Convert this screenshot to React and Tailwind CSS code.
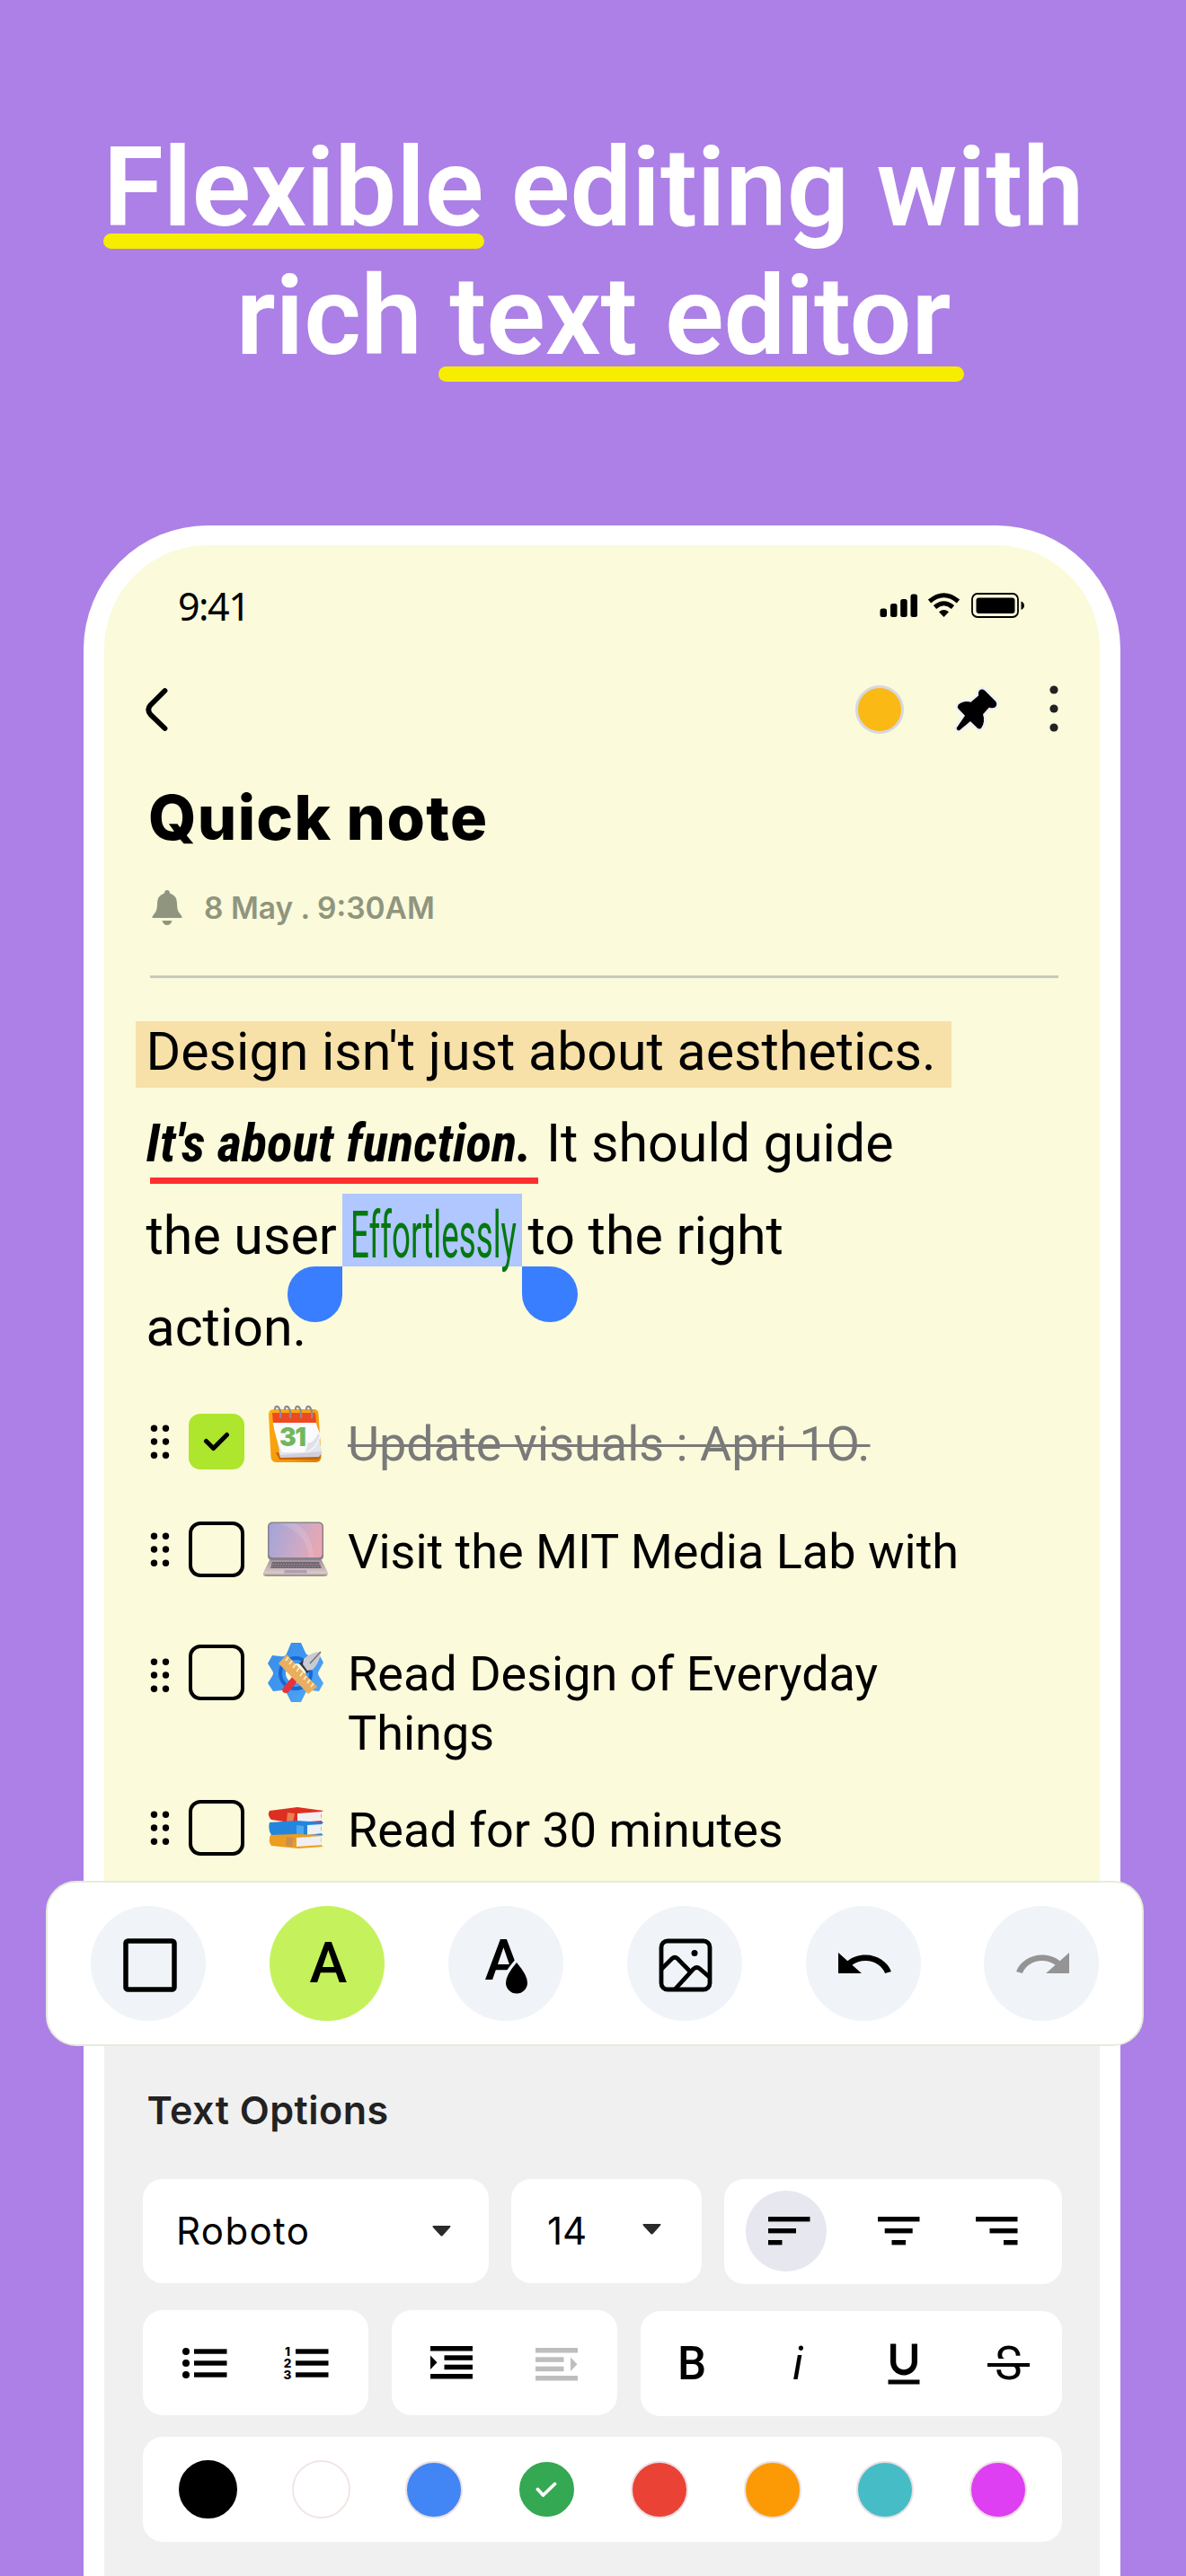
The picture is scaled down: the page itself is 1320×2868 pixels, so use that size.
import React from 'react';
import { MdFormatUnderlined } from 'react-icons/md';

const tasks = [
  { id: 1, text: 'Update visuals : Apri 1O.', icon: 'calendar', done: true, row: 'h-[120.6px]', offset: '' },
  { id: 2, text: 'Visit the MIT Media Lab with', icon: 'laptop', done: false, row: 'h-[135.2px]', offset: '' },
  { id: 3, text: 'Read Design of Everyday Things', icon: 'tools', done: false, row: 'h-[174.5px]', offset: 'mt-[1.5px]' },
  { id: 4, text: 'Read for 30 minutes', icon: 'books', done: false, row: 'h-[62px]', offset: '' },
];

const swatches = [
  'bg-black border-black size-[65px]',
  'bg-white border-[#f2e6e4] size-[65px]',
  'bg-[#4285f4] border-[#ecdfe3] size-[64px]',
  'bg-[#34a853] border-[#34a853] size-[61px]',
  'bg-[#ea4335] border-[#ecdfe3] size-[64px]',
  'bg-[#fb9a05] border-[#ecdfe3] size-[64px]',
  'bg-[#46bdc6] border-[#ecdfe3] size-[64px]',
  'bg-[#de3ff2] border-[#ecdfe3] size-[64px]',
];

const CalendarIcon = () => (
  <svg width="62" height="66" viewBox="0 0 62 66" className="mb-[15px]">
    <defs>
      <linearGradient id="calFrame" x1="0" y1="0" x2="1" y2="1">
        <stop offset="0" stopColor="#ffab12" />
        <stop offset="0.7" stopColor="#f29a0a" />
        <stop offset="1" stopColor="#d97706" />
      </linearGradient>
    </defs>
    <path d="M7 5h44q5 0 5.500 5l3 47q0 7-6 7H10q-6 0-6.500-6L1 11q0-6 6-6z" fill="url(#calFrame)" />
    <path d="M9 53l4 8h42q4-1 4-6z" fill="#c96304" />
    <path d="M5 9h48l1 11H6z" fill="#ee4a22" />
    <path d="M12 52l2 7 43-1 3-4-6-12z" fill="#cfd0da" />
    <path d="M6 20h48l6 32-46 4z" fill="#e4e5ee" />
    <path d="M6 20h47l6 14q-4 16-17 19H16Q8 36 6 20z" fill="#fbfbff" />
    <text x="13" y="46" fontFamily="Inter, sans-serif" fontWeight="900" fontSize="28" letterSpacing="-1.500" fill="#70b75a">31</text>
    <path d="M41 53q4-8 3-10 8-1 12-11l2 2q-4 15-17 19z" fill="#dfe0e8" />
    {[8, 19, 31, 43].map((x) => (
      <path key={x} d={`M${x} 5q0-4 3-3 4 3 3 12`} fill="none" stroke="#8c8c94" strokeWidth="2.200" strokeLinecap="round" />
    ))}
  </svg>
);

const LaptopIcon = () => (
  <svg width="74" height="62" viewBox="0 0 74 62">
    <defs>
      <linearGradient id="lapScreen" x1="0" y1="0.300" x2="1" y2="0.500">
        <stop offset="0" stopColor="#a5a5d6" />
        <stop offset="0.550" stopColor="#c9a9c8" />
        <stop offset="1" stopColor="#e9a7b2" />
      </linearGradient>
      <linearGradient id="lapBase" x1="0" y1="0" x2="0" y2="1">
        <stop offset="0" stopColor="#a3949c" />
        <stop offset="0.800" stopColor="#d9cac8" />
        <stop offset="1" stopColor="#8d8084" />
      </linearGradient>
    </defs>
    <rect x="6" y="0.500" width="62" height="43" rx="5" fill="#87808c" />
    <rect x="7.500" y="2" width="59" height="38" rx="4" fill="url(#lapScreen)" />
    <path d="M18 2h18q19 8 21 38h-5Q50 12 18 2z" fill="#fff" opacity="0.120" />
    <path d="M8 43h58l7 14q0 4-4 4H5q-5 0-4-4z" fill="url(#lapBase)" />
    <path d="M11 45h52l3 7H9z" fill="#706570" />
    <path d="M11 47.500h53M10 50h55" stroke="#a69aa2" strokeWidth="0.800" strokeDasharray="2 1" />
    <path d="M25 54h24l1 3.500H24z" fill="#b09db0" />
  </svg>
);

const ToolsIcon = () => (
  <svg width="64" height="68" viewBox="0 0 64 68">
    <defs>
      <linearGradient id="gear" x1="0" y1="0" x2="1" y2="1">
        <stop offset="0" stopColor="#3a8ce8" />
        <stop offset="0.500" stopColor="#3f97f2" />
        <stop offset="1" stopColor="#58aaf5" />
      </linearGradient>
    </defs>
    <path
      d="M27 1h11l5 11q2 4 7 3l8-1 5 9-5 9q-2 3 0 6l5 8-5 9-8-1q-5-1-7 3l-5 10H27l-5-10q-2-4-6-3l-9 1-6-9 5-8q2-3 0-6L1 24l5-9 9 1q5 1 7-3z"
      fill="url(#gear)"
    />
    <circle cx="32" cy="35" r="17" fill="none" stroke="#1768d3" strokeWidth="4" />
    <circle cx="32" cy="35" r="11" fill="#fbfada" />
    <path d="M19 50l10-12 6 5-11 13q-3 2-6 0-2-3 1-6z" fill="#e2353f" />
    <path d="M36 24l8-7 9 10-8 8z" fill="#35353f" />
    <path d="M41 19q9-8 19-8-1 12-9 20l-6 1-5-7z" fill="#c9cbd1" />
    <path d="M60 11L48 24" stroke="#70727c" strokeWidth="1.500" />
    <path d="M13 24l9-10 34 36-10 8z" fill="#e9ae5e" />
    <path d="M24 17l-3 4M28 21l-3 4M32 25l-3 4M36 29l-3 4M40 34l-3 4M44 38l-3 4M48 42l-3 4M52 46l-3 4" stroke="#fff2cf" strokeWidth="1.600" />
  </svg>
);

const BooksIcon = () => (
  <svg width="64" height="46" viewBox="0 0 64 46">
    <path d="M3 4L34 0l29 4-2 1v11l2 1-30 1L5 14Q0 9 3 4z" fill="#dc2f22" />
    <path d="M34 7l28-2q-3 5 0 10l-28 2z" fill="#f1eff2" />
    <path d="M23 6l8 1-2 10-7-1z" fill="#ee7d50" />
    <path d="M3 17l30-2 30 2-2 2v11l2 1-20 1-38-1q-4-6-2-14z" fill="#2385dd" />
    <path d="M45 20l17-1q-3 5 0 10l-17 2z" fill="#eef1f5" />
    <path d="M33 20l8 1v10l-8-1z" fill="#4da7f1" />
    <path d="M4 31l28-1 31 1-2 1v11l2 1-28 2-30-3q-4-5-1-12z" fill="#ed9d20" />
    <path d="M33 34l29-2q-3 5 0 10l-29 2z" fill="#f1eff2" />
    <path d="M22 33l8 1-2 10-7-1z" fill="#c98f51" />
  </svg>
);

const taskIcons = { calendar: CalendarIcon, laptop: LaptopIcon, tools: ToolsIcon, books: BooksIcon };

const DragHandle = () => (
  <svg width="22" height="62" viewBox="0 0 22 62">
    {[16.3, 31, 46.3].map((y) => (
      <g key={y}>
        <circle cx="4.500" cy={y} r="3.700" />
        <circle cx="17.500" cy={y} r="3.700" />
      </g>
    ))}
  </svg>
);

const TaskRow = ({ task }) => {
  const Icon = taskIcons[task.icon];
  const isTools = task.icon === 'tools';
  return (
    <li className={`flex items-start ${task.row}`}>
      <div className={`flex h-[62px] items-center ${task.offset}`}>
        <span className={isTools ? 'mt-[5px]' : ''}>
          <DragHandle />
        </span>
        <span
          className={`ml-[21px] flex size-[62px] items-center justify-center rounded-[13px] ${
            task.done ? 'bg-[#aee52d]' : 'border-4 border-black'
          }`}
        >
          {task.done && (
            <svg width="30" height="22" viewBox="0 0 30 22" fill="none" stroke="#000" strokeWidth="5" strokeLinecap="round" strokeLinejoin="round">
              <path d="M3.500 10.500l8 8L26.500 3.500" />
            </svg>
          )}
        </span>
        <span className="ml-[20px] flex w-[74px] justify-center">
          <Icon />
        </span>
      </div>
      <span
        className={`ml-[21px] mt-[1px] w-[695px] text-[54px] leading-[66.300px] ${
          task.done ? 'text-[#7a7a7a]' : 'text-black'
        }`}
      >
        {task.done ? <s className="decoration-[3px]">{task.text}</s> : task.text}
      </span>
    </li>
  );
};

const StatusIcons = () => (
  <svg width="161" height="28" viewBox="0 0 161 28">
    <rect x="0.500" y="17.500" width="7.500" height="9.500" rx="2.500" />
    <rect x="12" y="12" width="7.500" height="15" rx="2.500" />
    <rect x="23.200" y="7" width="7.500" height="20" rx="2.500" />
    <rect x="34.500" y="1.500" width="7.500" height="25.500" rx="2.500" />
    <g fill="none" stroke="#000" strokeWidth="5">
      <path d="M55.500 9.500q16-13.500 32 0" />
      <path d="M61.500 16q10-8.500 20 0" />
    </g>
    <path d="M66 21.200q5.500-4.400 11 0L71.500 27z" />
    <rect x="103" y="1" width="51" height="26" rx="6" fill="none" stroke="#000" strokeWidth="1.800" />
    <rect x="107.500" y="5.500" width="43" height="17.500" rx="3" />
    <path d="M157.500 9.500q3.500 1.500 3.500 4.700t-3.500 4.700z" />
  </svg>
);

const ToolButton = ({ active, children }) => (
  <button className={`flex size-[128px] items-center justify-center rounded-full ${active ? 'bg-[#c5f25c]' : 'bg-[#f0f4f8]'}`}>
    {children}
  </button>
);

const undoPath =
  'M12.5 8c-2.65 0-5.05.99-6.9 2.6L2 7v9h9l-3.62-3.62c1.39-1.16 3.16-1.88 5.12-1.88 3.54 0 6.55 2.31 7.6 5.500l2.37-.78C21.08 11.03 17.15 8 12.5 8z';

const Toolbar = () => (
  <div className="-ml-[65px] -mr-[49.500px] flex h-[184px] items-center justify-between rounded-[34px] border-2 border-[#e7ebda] bg-white pl-[48px] pr-[47.500px]">
    <ToolButton>
      <svg width="60" height="60" viewBox="0 0 60 60" className="ml-[3px] mt-[3px]">
        <rect x="3" y="3" width="54" height="54" rx="2.500" fill="none" stroke="#000" strokeWidth="5.500" />
      </svg>
    </ToolButton>
    <ToolButton active>
      <span className="ml-[3px] -mt-[1px] text-[63px] font-medium leading-none">A</span>
    </ToolButton>
    <ToolButton>
      <div className="relative flex items-center">
        <span className="-ml-[5px] -mt-[8px] text-[63px] font-medium leading-none">A</span>
        <svg width="36" height="52" viewBox="0 0 36 52" className="absolute left-[13px] top-[18px]">
          <path d="M18 10q12 14 12 21a12 12 0 0 1-24 0q0-7 12-21z" fill="#000" stroke="#f0f4f8" strokeWidth="9" />
          <path d="M18 8q12 14 12 22.500a12 12 0 0 1-24 0q0-8.500 12-22.500z" fill="#000" />
        </svg>
      </div>
    </ToolButton>
    <ToolButton>
      <svg width="60" height="60" viewBox="0 0 60 60" className="ml-[3px] mt-[3px]" fill="none" stroke="#000" strokeWidth="4.800">
        <rect x="3" y="3" width="54" height="54" rx="7" />
        <path d="M3 34.500l12-12q3-2.500 6 0L35 37" />
        <path d="M18 57l21-23q3.500-3 7 0l11.500 10" />
        <circle cx="40" cy="16.500" r="3.500" fill="#000" stroke="none" />
      </svg>
    </ToolButton>
    <ToolButton>
      <svg width="59" height="23" viewBox="2 7 20.500 9" preserveAspectRatio="none" className="-mt-[2px] ml-[3px]">
        <path d={undoPath} />
      </svg>
    </ToolButton>
    <ToolButton>
      <svg width="59" height="23" viewBox="2 7 20.500 9" preserveAspectRatio="none" className="-mt-[2px] ml-[3px] -scale-x-100" fill="#949494">
        <path d={undoPath} />
      </svg>
    </ToolButton>
  </div>
);

const Caret = () => (
  <svg width="21" height="12" viewBox="0 0 21 12" fill="#2a2a2a">
    <path d="M1 0h19q1 .8 0 1.800l-8.500 9.400q-1 .8-2 0L.8 1.800Q0 .8 1 0z" />
  </svg>
);

const alignX = { left: [0, 0, 0], center: [0, 7.7, 15.5], right: [0, 15.5, 31] };

const AlignIcon = ({ side }) => (
  <svg width="47" height="32" viewBox="0 0 47 32">
    <rect x={alignX[side][0]} y="0" width="46.500" height="5.400" />
    <rect x={alignX[side][1]} y="13" width="31" height="5.400" />
    <rect x={alignX[side][2]} y="26" width="15.500" height="5.400" />
  </svg>
);

const BulletListIcon = () => (
  <svg width="50" height="38" viewBox="0 0 50 38">
    {[6, 19, 32].map((y) => (
      <g key={y}>
        <circle cx="4" cy={y} r="4" />
        <rect x="13" y={y - 2.7} width="36.500" height="5.400" />
      </g>
    ))}
  </svg>
);

const NumberListIcon = () => (
  <svg width="52" height="38" viewBox="-2 0 52 38" className="overflow-visible">
    {[6, 19, 32].map((y, i) => (
      <g key={y}>
        <text x="4" y={y + 5} textAnchor="middle" fontFamily="Inter, sans-serif" fontSize="13.500" fontWeight="800">{i + 1}</text>
        <rect x="13" y={y - 2.7} width="36.500" height="5.400" />
      </g>
    ))}
  </svg>
);

const IndentIcon = () => (
  <svg width="47" height="38" viewBox="0 0 47 38">
    <rect width="47" height="5.500" />
    <rect x="15.500" y="10.300" width="31.500" height="5.500" />
    <rect x="15.500" y="20.700" width="31.500" height="5.500" />
    <rect y="31" width="47" height="5.500" />
    <path d="M0 10.500l7.500 7.700L0 26z" />
  </svg>
);

const OutdentIcon = () => (
  <svg width="47" height="38" viewBox="0 0 47 38" fill="#bebebe">
    <rect width="47" height="5.500" />
    <rect y="10.300" width="31.500" height="5.500" />
    <rect y="20.700" width="31.500" height="5.500" />
    <rect y="31" width="47" height="5.500" />
    <path d="M39 10.500l7.500 7.700L39 26z" />
  </svg>
);

const TextOptions = () => (
  <section className="flex-1 bg-[#f0f0f0] pl-[43px] pr-[42px] pt-[45.700px] font-['Inter',sans-serif]">
    <h2 className="ml-[4.500px] text-[43px] font-semibold leading-[50px] tracking-[0.500px] text-[#222]">Text Options</h2>

    {/* Font, size and alignment */}
    <div className="mt-[52px] flex gap-[25px]">
      <button className="flex h-[116px] w-[385px] items-center justify-between rounded-[22px] bg-white pl-[37px] pr-[42px]">
        <span className="text-[42px] leading-none tracking-[1.400px]">Roboto</span>
        <Caret />
      </button>
      <button className="flex h-[116px] w-[212px] items-center justify-between rounded-[22px] bg-white pl-[40px] pr-[45px]">
        <span className="text-[42px] leading-none">14</span>
        <span className="-mt-[4px]"><Caret /></span>
      </button>
      <div className="flex h-[117px] flex-1 items-center rounded-[22px] bg-white pl-[24px]">
        <span className="flex size-[90px] items-center justify-center rounded-full bg-[#e7e7f0] pl-[6px]">
          <AlignIcon side="left" />
        </span>
        <span className="ml-[57px]"><AlignIcon side="center" /></span>
        <span className="ml-[62px]"><AlignIcon side="right" /></span>
      </div>
    </div>

    {/* Lists, indentation and inline styles */}
    <div className="mt-[29.500px] flex gap-[26px]">
      <div className="flex h-[117px] w-[251px] items-center rounded-[22px] bg-white pl-[44px]">
        <BulletListIcon />
        <span className="ml-[61px]"><NumberListIcon /></span>
      </div>
      <div className="flex h-[117px] w-[251px] items-center rounded-[22px] bg-white pl-[43px]">
        <IndentIcon />
        <span className="ml-[70px] mt-[4px]"><OutdentIcon /></span>
      </div>
      <div className="mt-px flex h-[117px] flex-1 items-center rounded-[22px] bg-white pl-[41px] font-['Roboto',sans-serif] text-[51px] leading-none">
        <span className="w-[128px] font-medium">B</span>
        <span className="w-[93px] italic">i</span>
        <MdFormatUnderlined className="ml-[1px] size-[60px]" />
        <span className="relative ml-[63px] flex w-[47px] justify-center">
          S
          <span className="absolute left-0 top-[20px] h-[9px] w-[47px] border-t-5 border-white bg-black" />
        </span>
      </div>
    </div>

    {/* Text colour */}
    <div className="mt-[23px] flex h-[117px] items-center rounded-[22px] bg-white pl-[10px] pr-[8px]">
      {swatches.map((color, i) => (
        <div key={color} className="flex flex-1 justify-center">
          <span className={`flex items-center justify-center rounded-full border-2 ${color}`}>
            {i === 3 && (
              <svg width="24" height="18" viewBox="0 0 24 18" fill="none" stroke="#fff" strokeWidth="3.800" strokeLinecap="round" strokeLinejoin="round">
                <path d="M2.500 8.500l6 6.500L21.500 2.500" />
              </svg>
            )}
          </span>
        </div>
      ))}
    </div>
  </section>
);

const NoteBody = () => (
  <div className="mt-[31px] whitespace-pre pl-[46.500px] text-[59.100px] leading-[102.400px] text-black">
    <div className="relative h-[102.400px]">
      <span className="absolute -left-[12px] top-[17px] h-[73.500px] w-[908px] bg-[#f7e1a8]" />
      <span className="relative">Design isn't just about aesthetics.</span>
    </div>
    <div className="flex h-[102.400px]">
      <span className="relative w-[445.500px] font-['Roboto_Condensed','Roboto',sans-serif] font-bold italic [font-stretch:75%]">
        It's about function.
        <span className="absolute left-[4px] top-[88.500px] h-[7px] w-[432px] bg-[#ff2e2e]" />
      </span>
      <span>It should guide</span>
    </div>
    <div className="flex h-[102.400px]">
      <span className="w-[218.500px]">the user</span>
      <span className="relative w-[206.500px]">
        <span className="absolute left-0 top-[4px] h-[81.500px] w-[200px] bg-[#b1c7ff]" />
        <span className="absolute -left-[61px] top-[85.500px] h-[62px] w-[61px] rounded-[31px] rounded-tr-none bg-[#397eff]" />
        <span className="absolute left-[200px] top-[85.500px] h-[62px] w-[62px] rounded-[31px] rounded-tl-none bg-[#397eff]" />
        <span className="absolute left-[9px] top-0 origin-left scale-x-[0.510] text-[72px] font-normal text-[#04780f]">Effortlessly</span>
      </span>
      <span>to the right</span>
    </div>
    <div className="h-[102.400px]">action.</div>
  </div>
);

const App = () => {
  return (
    <div className="flex h-[2868px] w-[1320px] flex-col overflow-hidden bg-[#ac80e6] font-['Roboto',sans-serif]">
      <h1 className="flex h-[584.500px] shrink-0 flex-col items-center pl-px pt-[138px] text-[122px] font-semibold leading-[143px] text-white">
        <span className="whitespace-nowrap">
          <span className="relative inline-block">
            Flexible
            <span className="absolute left-0 top-[122px] h-[17px] w-[424px] rounded-full bg-[#f6ed00]" />
          </span>{' '}
          editing with
        </span>
        <span className="whitespace-nowrap">
          rich{' '}
          <span className="relative inline-block">
            text editor
            <span className="absolute -left-[12px] top-[127px] h-[17px] w-[585px] rounded-full bg-[#f6ed00]" />
          </span>
        </span>
      </h1>

      <div className="ml-[93px] flex w-[1153.500px] flex-1 flex-col rounded-t-[138px] bg-white px-[23px] pt-[22.500px]">
        <main className="h-[1487px] shrink-0 rounded-t-[115px] bg-[#fbfada]">
          <div className="flex h-[134.500px] items-center justify-between pl-[82px] pr-[84px]">
            <span className="font-['Noto_Sans',sans-serif] text-[43px] leading-none tracking-[-1.500px]">9:41</span>
            <StatusIcons />
          </div>

          <div className="flex h-[97px] items-center pl-[46px] pr-[46px]">
            <svg width="25" height="50" viewBox="0 0 25 50" fill="none" stroke="#000" strokeWidth="5.800" strokeLinecap="round">
              <path d="M21.500 4L5.500 20q-4.500 5 0 10.500L21.500 46" />
            </svg>
            <span className="ml-auto size-[54px] rounded-full border-3 border-[#d6d8e2] bg-[#fab915]" />
            <svg width="50" height="52" viewBox="0 0 50 50" preserveAspectRatio="none" className="ml-[56px]">
              <path
                d="M28 4.500q3-2.500 6 0L46 16q2.500 3 0 6-3 2.500-7 .500L32 30q3 8-2 15-2 1.500-4 0l-8-7.500L6 47q-3 1-3.500-2L12 31.500 4.500 24q-1.500-2 0-4 6-5 14-3L27 10q-1-3 1-5.500z"
                fill="#000"
                stroke="#f0f0f6"
                strokeWidth="5"
                paintOrder="stroke"
              />
            </svg>
            <svg width="10" height="52" viewBox="0 0 10 52" fill="#222" className="ml-[55.500px] -mt-[3px]">
              <circle cx="5" cy="5" r="4.600" />
              <circle cx="5" cy="26" r="4.600" />
              <circle cx="5" cy="47" r="4.600" />
            </svg>
          </div>

          <h2 className="ml-[49px] mt-[27px] font-['Inter',sans-serif] text-[68.500px] font-extrabold leading-[90px] tracking-[1.300px] text-black">Quick note</h2>
          <div className="ml-[53px] mt-[35.500px] flex h-[40px] items-center text-[#8f957e]">
            <svg width="34" height="40" viewBox="0 0 34 40" fill="currentColor">
              <path d="M17 0q3 0 3 3.500 8 2.500 8 11.500 0 8 3 11 2.500 2.500 2.500 5h-33q0-2.500 2.500-5 3-3 3-11 0-9 8-11.500Q14 0 17 0z" />
              <path d="M11.500 34h11q-1.500 5-5.500 5t-5.500-5z" />
            </svg>
            <span className="ml-[24px] font-['Inter',sans-serif] text-[33.500px] font-semibold leading-[40px]">8 May . 9:30AM</span>
          </div>
          <div className="ml-[51px] mr-[46px] mt-[54.500px] h-[3.500px] bg-[#c8cbb9]" />

          <NoteBody />

          <ul className="mt-[44.300px] pl-[51px]">
            {tasks.map((task) => (
              <TaskRow key={task.id} task={task} />
            ))}
          </ul>
        </main>

        <Toolbar />
        <TextOptions />
      </div>
    </div>
  );
};

export default App;
